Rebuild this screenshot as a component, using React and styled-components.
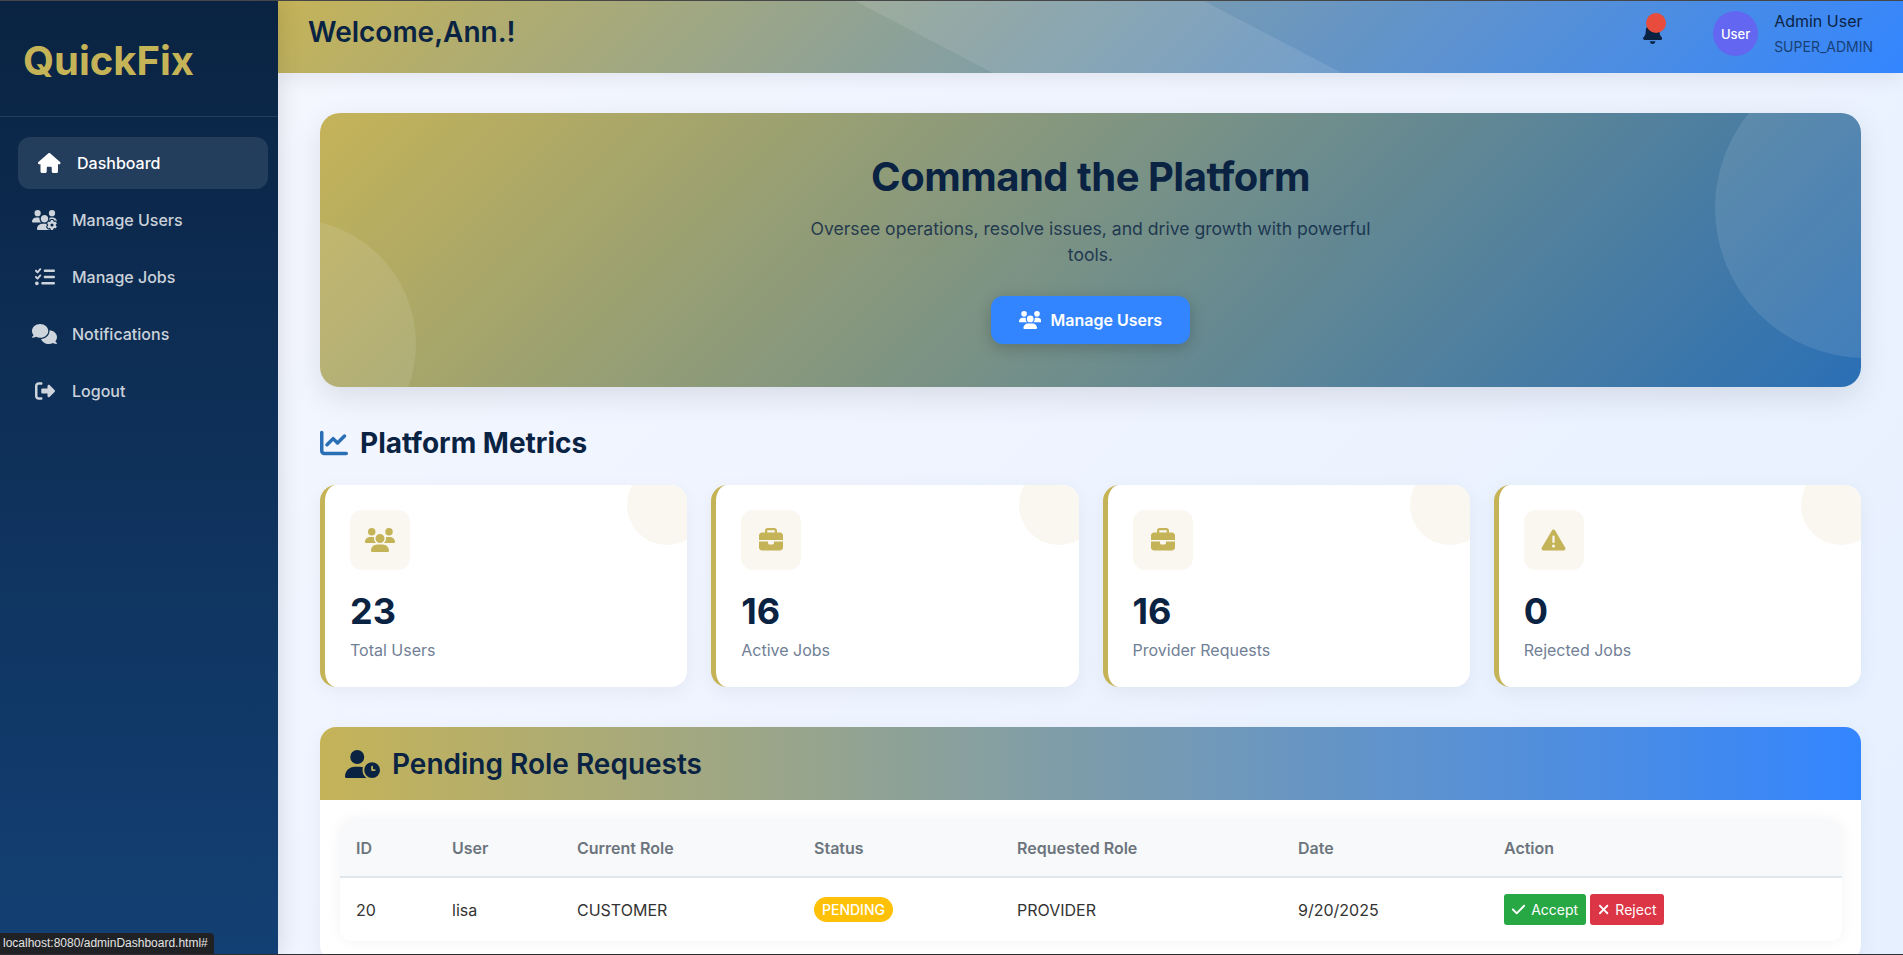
import React from "react";
import styled, { createGlobalStyle } from "styled-components";
import {
  FaHouse, FaUsersGear, FaListCheck, FaComments, FaRightFromBracket, FaBell, FaUsers,
  FaChartLine, FaBriefcase, FaTriangleExclamation, FaUserClock, FaCheck, FaXmark,
} from "react-icons/fa6";

const navy = "#0a2342";
const gold = "#c5b358";
const blue = "#3385ff";

const Global = createGlobalStyle`
  * { box-sizing: border-box; }
  html, body { margin: 0; padding: 0; overflow: hidden; }
  body { font-family: "Inter", "Liberation Sans", sans-serif; color: ${navy}; }
  svg { flex: none; }
`;

/* react-icons draws every glyph in a 1em square; these keep the glyph's own proportions */
const HouseIcon = styled(FaHouse)`width: 1.125em;`;
const UsersGearIcon = styled(FaUsersGear)`width: 1.25em;`;
const CommentsIcon = styled(FaComments)`width: 1.25em;`;
const UsersIcon = styled(FaUsers)`width: 1.25em;`;
const UserClockIcon = styled(FaUserClock)`width: 1.25em;`;
const BellIcon = styled(FaBell)`width: 0.875em;`;
const CheckIcon = styled(FaCheck)`width: 0.875em;`;
const XmarkIcon = styled(FaXmark)`width: 0.75em;`;
const TriangleIcon = styled(FaTriangleExclamation)`width: 1.125em;`;

const App_ = styled.div`
  position: relative;
  display: flex;
  width: 1903px;
  height: 955px;
  overflow: hidden;
  border-top: 1px solid #464646;
  border-bottom: 1px solid #2e2e2e;
`;

const Sidebar = styled.aside`
  position: relative;
  z-index: 2;
  flex: 0 0 278px;
  background: linear-gradient(180deg, #0a2342 0%, #134074 100%);
  box-shadow: 4px 0 20px rgba(0, 0, 0, 0.1);
`;

const Brand = styled.div`
  height: 116px;
  padding: 4px 0 0 23px;
  display: flex;
  align-items: center;
  border-bottom: 1px solid rgba(255, 255, 255, 0.1);
`;

const Logo = styled.div`
  font-size: 40px;
  font-weight: 700;
  color: ${gold};
  line-height: 1;
`;

const Nav = styled.nav`
  display: flex;
  flex-direction: column;
  gap: 5px;
  padding: 20px 15px 0 13px;
`;

const NavItem = styled.a`
  display: flex;
  align-items: center;
  gap: 15px;
  height: 52px;
  padding: 0 19px;
  border-radius: 12px;
  font-size: 16px;
  font-weight: 500;
  color: ${(p) => (p.$active ? "#fff" : "rgba(255,255,255,0.8)")};
  background: ${(p) => (p.$active ? "rgba(255,255,255,0.1)" : "transparent")};
  transform: ${(p) => (p.$active ? "translateX(5px)" : "none")};
`;

const NavIcon = styled.span`
  flex: 0 0 25px;
  display: flex;
  justify-content: center;
  font-size: 20px;
`;

const Main = styled.main`
  flex: 1;
  min-width: 0;
  display: flex;
  flex-direction: column;
  background: linear-gradient(135deg, #f5f7ff 0%, #e6f0ff 100%);
`;

const Header = styled.header`
  position: relative;
  z-index: 1;
  flex: 0 0 72px;
  display: flex;
  align-items: center;
  justify-content: space-between;
  padding: 10px 30px 17px;
  background: linear-gradient(135deg, ${gold} 0%, ${blue} 100%);
  box-shadow: 0 4px 20px rgba(0, 0, 0, 0.08);
  overflow: hidden;
  &::before {
    content: "";
    position: absolute;
    inset: 0;
    background: rgba(255, 255, 255, 0.1);
    clip-path: polygon(577px 0, 926px 0, 1064px 100%, 715px 100%);
  }
`;

const Welcome = styled.h1`
  position: relative;
  margin: 0 0 4px;
  font-size: 28px;
  font-weight: 600;
  color: ${navy};
`;

const HeaderRight = styled.div`
  position: relative;
  display: flex;
  align-items: center;
`;

const BellWrap = styled.div`
  position: relative;
  display: flex;
  font-size: 22px;
  color: ${navy};
  margin: 0 51px 2px 0;
`;

const BellDot = styled.span`
  position: absolute;
  top: -9px;
  right: -4px;
  width: 20px;
  height: 20px;
  border-radius: 50%;
  background: #e74c3c;
`;

const Avatar = styled.div`
  width: 45px;
  height: 45px;
  border-radius: 50%;
  background: #6366f1;
  color: #fff;
  display: flex;
  align-items: center;
  justify-content: center;
  font-size: 13px;
  font-weight: 500;
  margin-right: 16px;
`;

const UserInfo = styled.div`
  display: flex;
  flex-direction: column;
  gap: 7px;
`;

const UserName = styled.div`
  font-size: 16px;
  line-height: 19px;
  color: ${navy};
`;

const UserRole = styled.div`
  font-size: 14px;
  line-height: 17px;
  color: ${navy};
  opacity: 0.7;
`;

const Content = styled.div`
  flex: 1;
  min-height: 0;
  padding: 40px 42px 0;
  overflow: hidden;
`;

const Hero = styled.section`
  position: relative;
  height: 274px;
  border-radius: 20px;
  overflow: hidden;
  padding-top: 40px;
  display: flex;
  flex-direction: column;
  align-items: center;
  text-align: center;
  background: linear-gradient(135deg, ${gold} 0%, #2a6fb5 100%);
  box-shadow: 0 10px 30px rgba(0, 0, 0, 0.1);
  &::before, &::after {
    content: "";
    position: absolute;
    border-radius: 50%;
    background: rgba(255, 255, 255, 0.1);
  }
  &::before {
    width: 300px;
    height: 300px;
    top: -20%;
    right: -10%;
  }
  &::after {
    width: 250px;
    height: 250px;
    bottom: -30%;
    left: -10%;
  }
`;

const HeroTitle = styled.h2`
  margin: 0;
  font-size: 40px;
  line-height: 48px;
  font-weight: 700;
  letter-spacing: -0.5px;
  color: ${navy};
`;

const HeroText = styled.p`
  margin: 15px 0 0;
  width: 600px;
  font-size: 17.6px;
  line-height: 26px;
  color: ${navy};
  opacity: 0.8;
`;

const HeroButton = styled.a`
  position: relative;
  z-index: 1;
  margin-top: 28px;
  display: flex;
  align-items: center;
  gap: 9px;
  height: 48px;
  padding: 0 28px;
  border-radius: 12px;
  background: ${blue};
  color: #fff;
  font-size: 16px;
  font-weight: 600;
  box-shadow: 0 4px 15px rgba(0, 0, 0, 0.2);
  svg { font-size: 18px; }
`;

const SectionTitle = styled.h2`
  margin: 36px 0 0;
  height: 40px;
  display: flex;
  align-items: center;
  gap: 12px;
  font-size: 28px;
  font-weight: 700;
  color: ${navy};
  svg { color: #2a6fb5; }
`;

const Cards = styled.div`
  display: grid;
  grid-template-columns: repeat(4, 1fr);
  gap: 24px;
  margin-top: 22px;
`;

const Card = styled.div`
  position: relative;
  height: 202px;
  padding: 25px;
  background: #fff;
  border-left: 5px solid ${gold};
  border-radius: 16px;
  overflow: hidden;
  box-shadow: 0 5px 20px rgba(0, 0, 0, 0.05);
  &::before {
    content: "";
    position: absolute;
    top: -20px;
    right: -20px;
    width: 80px;
    height: 80px;
    border-radius: 50%;
    background: #f9f7f0;
  }
`;

const CardIcon = styled.div`
  width: 60px;
  height: 60px;
  border-radius: 12px;
  background: #f9f7f0;
  color: ${gold};
  display: flex;
  align-items: center;
  justify-content: center;
  font-size: 24px;
`;

const CardValue = styled.div`
  margin-top: 20px;
  font-size: 36px;
  line-height: 43px;
  font-weight: 700;
  color: ${navy};
`;

const CardLabel = styled.div`
  margin-top: 5px;
  font-size: 16px;
  line-height: 24px;
  color: #718096;
`;

const Panel = styled.section`
  margin-top: 40px;
  background: #fff;
  border-radius: 16px;
  overflow: hidden;
  box-shadow: 0 5px 20px rgba(0, 0, 0, 0.05);
`;

const PanelHead = styled.div`
  height: 73px;
  padding: 0 25px;
  display: flex;
  align-items: center;
  gap: 12px;
  background: linear-gradient(90deg, ${gold} 0%, ${blue} 100%);
  font-size: 28px;
  font-weight: 600;
  color: ${navy};
`;

const PanelBody = styled.div`
  padding: 20px;
`;

const Table = styled.table`
  width: 100%;
  table-layout: fixed;
  border-collapse: separate;
  border-spacing: 0;
  border-radius: 12px;
  overflow: hidden;
  box-shadow: 0 0 15px rgba(0, 0, 0, 0.05);
`;

const Th = styled.th`
  width: ${(p) => p.$w}px;
  height: 58px;
  padding: 0 16px;
  text-align: left;
  font-size: 16px;
  font-weight: 600;
  color: #6c757d;
  background: #f8f9fa;
  border-bottom: 2px solid #dee6ee;
`;

const Td = styled.td`
  height: 63px;
  padding: 0 16px;
  font-size: 16px;
  color: #333;
  background: #fff;
`;

const Badge = styled.span`
  display: inline-block;
  height: 25px;
  line-height: 25px;
  padding: 0 8px;
  border-radius: 13px;
  background: #ffc107;
  color: #fff;
  font-size: 14px;
  font-weight: 500;
`;

const Actions = styled.div`
  display: flex;
  gap: 4px;
`;

const ActionButton = styled.button`
  display: flex;
  align-items: center;
  gap: 6px;
  height: 31px;
  padding: 0 8px;
  border: 0;
  border-radius: 3px;
  font-family: inherit;
  font-size: 14px;
  color: #fff;
  background: ${(p) => (p.$tone === "ok" ? "#28a745" : "#dc3545")};
  svg { font-size: 15px; }
`;

const StatusTip = styled.div`
  position: absolute;
  z-index: 5;
  left: 0;
  bottom: 0;
  width: 214px;
  height: 21px;
  padding-left: 3px;
  line-height: 21px;
  background: #202124;
  border-top-right-radius: 4px;
  color: #e3e3e3;
  font-family: "Liberation Sans", sans-serif;
  font-size: 12px;
  white-space: nowrap;
`;

const nav = [
  { label: "Dashboard", Icon: HouseIcon, active: true },
  { label: "Manage Users", Icon: UsersGearIcon },
  { label: "Manage Jobs", Icon: FaListCheck },
  { label: "Notifications", Icon: CommentsIcon },
  { label: "Logout", Icon: FaRightFromBracket },
];

const stats = [
  { value: 23, label: "Total Users", Icon: UsersIcon },
  { value: 16, label: "Active Jobs", Icon: FaBriefcase },
  { value: 16, label: "Provider Requests", Icon: FaBriefcase },
  { value: 0, label: "Rejected Jobs", Icon: TriangleIcon },
];

const columns = [
  ["ID", 96], ["User", 125], ["Current Role", 237], ["Status", 203],
  ["Requested Role", 281], ["Date", 206], ["Action", 354],
];

export default function App() {
  return (
    <App_>
      <Global />
      <Sidebar>
        <Brand><Logo>QuickFix</Logo></Brand>
        <Nav>
          {nav.map(({ label, Icon, active }) => (
            <NavItem key={label} $active={active}>
              <NavIcon><Icon /></NavIcon>
              {label}
            </NavItem>
          ))}
        </Nav>
      </Sidebar>
      <Main>
        <Header>
          <Welcome>Welcome,Ann.!</Welcome>
          <HeaderRight>
            <BellWrap><BellIcon /><BellDot /></BellWrap>
            <Avatar>User</Avatar>
            <UserInfo>
              <UserName>Admin User</UserName>
              <UserRole>SUPER_ADMIN</UserRole>
            </UserInfo>
          </HeaderRight>
        </Header>
        <Content>
          <Hero>
            <HeroTitle>Command the Platform</HeroTitle>
            <HeroText>Oversee operations, resolve issues, and drive growth with powerful tools.</HeroText>
            <HeroButton><UsersIcon />Manage Users</HeroButton>
          </Hero>
          <SectionTitle><FaChartLine />Platform Metrics</SectionTitle>
          <Cards>
            {stats.map(({ value, label, Icon }) => (
              <Card key={label}>
                <CardIcon><Icon /></CardIcon>
                <CardValue>{value}</CardValue>
                <CardLabel>{label}</CardLabel>
              </Card>
            ))}
          </Cards>
          <Panel>
            <PanelHead><UserClockIcon />Pending Role Requests</PanelHead>
            <PanelBody>
              <Table>
                <thead>
                  <tr>{columns.map(([c, w]) => <Th key={c} $w={w}>{c}</Th>)}</tr>
                </thead>
                <tbody>
                  <tr>
                    <Td>20</Td>
                    <Td>lisa</Td>
                    <Td>CUSTOMER</Td>
                    <Td><Badge>PENDING</Badge></Td>
                    <Td>PROVIDER</Td>
                    <Td>9/20/2025</Td>
                    <Td>
                      <Actions>
                        <ActionButton $tone="ok"><CheckIcon />Accept</ActionButton>
                        <ActionButton><XmarkIcon />Reject</ActionButton>
                      </Actions>
                    </Td>
                  </tr>
                </tbody>
              </Table>
            </PanelBody>
          </Panel>
        </Content>
      </Main>
      <StatusTip>localhost:8080/adminDashboard.html#</StatusTip>
    </App_>
  );
}
